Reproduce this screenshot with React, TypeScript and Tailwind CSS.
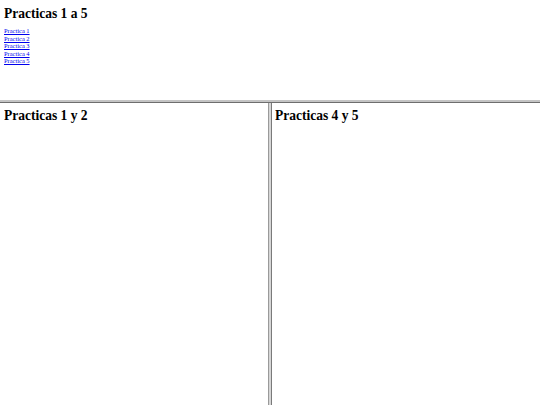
const LINKS = ["Practica 1", "Practica 2", "Practica 3", "Practica 4", "Practica 5"];

function Heading({ children }: { children: string }) {
  return (
    <h1 className="text-[15px] leading-[16px] font-bold whitespace-nowrap origin-left scale-x-[0.9]">
      {children}
    </h1>
  );
}

export default function App() {
  return (
    <div className="w-[540px] h-[405px] overflow-hidden bg-white flex flex-col font-['Liberation_Serif',serif] text-black">
      {/* Top frame */}
      <div className="h-[100px] px-1 pt-[4.5px]">
        <Heading>Practicas 1 a 5</Heading>
        <ul className="mt-[7.5px]">
          {LINKS.map((l) => (
            <li key={l} className="text-[7px] leading-[7.5px] whitespace-nowrap origin-left scale-x-[0.92]">
              <a href="#" className="text-[#0000ee] underline">{l}</a>
            </li>
          ))}
        </ul>
      </div>

      {/* Horizontal frame border */}
      <div className="h-[3px] flex flex-col">
        <div className="h-[2px] bg-[#c4c4c4]" />
        <div className="h-[1px] bg-[#6e6e6e]" />
      </div>

      {/* Bottom frames */}
      <div className="flex-1 flex">
        <div className="w-[268px] px-1 pt-[4px]">
          <Heading>Practicas 1 y 2</Heading>
        </div>
        <div className="w-[4px] flex">
          <div className="w-[1px] bg-[#9a9a9a]" />
          <div className="w-[2px] bg-[#d6d6d6]" />
          <div className="w-[1px] bg-[#7a7a7a]" />
        </div>
        <div className="flex-1 px-[3px] pt-[4px]">
          <Heading>Practicas 4 y 5</Heading>
        </div>
      </div>
    </div>
  );
}
